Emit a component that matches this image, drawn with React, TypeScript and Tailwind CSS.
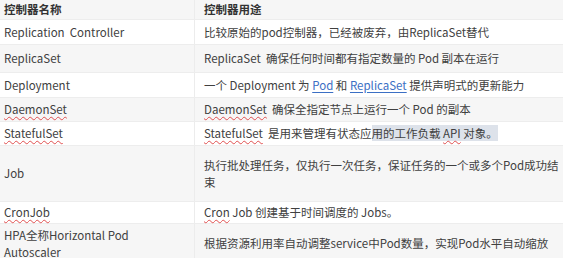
const ROWS = [
  { name: 'Replication  Controller', h: 'h-[25px]' },
  { name: 'ReplicaSet', h: 'h-[28px]' },
  { name: 'Deployment', h: 'h-[25px]' },
  { name: 'DaemonSet', h: 'h-[24px]' },
  { name: 'StatefulSet', h: 'h-[24px]' },
  { name: 'Job', h: 'h-[56px]' },
  { name: 'CronJob', h: 'h-[22px]' },
  { name: 'HPA', h: 'h-[40px]' },
]

const Wavy = ({ children }: { children: React.ReactNode }) => (
  <span className="underline decoration-wavy decoration-[#e05050] decoration-1 underline-offset-2">{children}</span>
)

const Link = ({ children }: { children: React.ReactNode }) => (
  <span className="text-[#3b6fc4] underline underline-offset-2">{children}</span>
)

function Use({ i }: { i: number }) {
  switch (i) {
    case 0:
      return <>比较原始的pod控制器，已经被废弃，由ReplicaSet替代</>
    case 1:
      return <>ReplicaSet&nbsp; 确保任何时间都有指定数量的 Pod 副本在运行</>
    case 2:
      return <>一个 Deployment 为 <Link>Pod</Link> 和 <Link>ReplicaSet</Link> 提供声明式的更新能力</>
    case 3:
      return <><Wavy>DaemonSet</Wavy>&nbsp; 确保全指定节点上运行一个 Pod 的副本</>
    case 4:
      return (
        <>
          <Wavy>StatefulSet</Wavy>&nbsp; 是用来管理有状态应
          <span className="bg-[#dde2ea]">用的工作负载 <Wavy>API</Wavy> 对象。</span>
        </>
      )
    case 5:
      return <>执行批处理任务，仅执行一次任务，保证任务的一个或多个Pod成功结<br />束</>
    case 6:
      return <><Wavy>Cron</Wavy> Job 创建基于时间调度的 Jobs。</>
    default:
      return <>根据资源利用率自动调整service中Pod数量，实现Pod水平自动缩放</>
  }
}

function Name({ i, name }: { i: number; name: string }) {
  if (i === 3) return <Wavy>DaemonSet</Wavy>
  if (i === 4) return <Wavy>StatefulSet</Wavy>
  if (i === 6) return <Wavy>CronJob</Wavy>
  if (i === 7) return <>HPA全称Horizontal Pod<br />Autoscaler</>
  return <span className="whitespace-pre">{name}</span>
}

export default function App() {
  return (
    <div
      className="w-[563px] h-[258px] overflow-hidden bg-white text-[11.5px] leading-[17px] text-[#404040]"
      style={{ fontFamily: '"Noto Sans CJK SC", "Noto Sans", sans-serif' }}
    >
      <div className="grid grid-cols-[195px_1fr] h-[19px] bg-[#f6f6f6] font-bold text-[#333]">
        <div className="flex items-center px-[4px] border-r border-[#ececec]">控制器名称</div>
        <div className="flex items-center px-[9px]">控制器用途</div>
      </div>
      {ROWS.map((r, i) => (
        <div
          key={i}
          className={`grid grid-cols-[195px_1fr] border-t border-[#ededed] ${r.h} ${i % 2 === 1 ? 'bg-[#f6f6f6]' : 'bg-white'}`}
        >
          <div className="flex items-center px-[4px] border-r border-[#ececec]">
            <div><Name i={i} name={r.name} /></div>
          </div>
          <div className="flex items-center pl-[9px] pr-[4px]">
            <div className="whitespace-nowrap"><Use i={i} /></div>
          </div>
        </div>
      ))}
    </div>
  )
}
